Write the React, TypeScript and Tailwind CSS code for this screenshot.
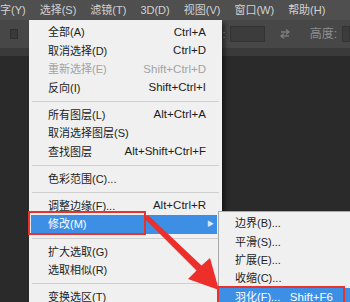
import React from 'react'

type Item =
  | { kind: 'sep' }
  | { kind: 'item'; label: string; shortcut?: string; disabled?: boolean; active?: boolean; sub?: boolean }

const MENU: Item[] = [
  { kind: 'item', label: '全部(A)', shortcut: 'Ctrl+A' },
  { kind: 'item', label: '取消选择(D)', shortcut: 'Ctrl+D' },
  { kind: 'item', label: '重新选择(E)', shortcut: 'Shift+Ctrl+D', disabled: true },
  { kind: 'item', label: '反向(I)', shortcut: 'Shift+Ctrl+I' },
  { kind: 'sep' },
  { kind: 'item', label: '所有图层(L)', shortcut: 'Alt+Ctrl+A' },
  { kind: 'item', label: '取消选择图层(S)' },
  { kind: 'item', label: '查找图层', shortcut: 'Alt+Shift+Ctrl+F' },
  { kind: 'sep' },
  { kind: 'item', label: '色彩范围(C)...' },
  { kind: 'sep' },
  { kind: 'item', label: '调整边缘(F)...', shortcut: 'Alt+Ctrl+R' },
  { kind: 'item', label: '修改(M)', active: true, sub: true },
  { kind: 'sep' },
  { kind: 'item', label: '扩大选取(G)' },
  { kind: 'item', label: '选取相似(R)' },
  { kind: 'sep' },
  { kind: 'item', label: '变换选区(T)' },
]

const SUB = [
  { label: '边界(B)...' },
  { label: '平滑(S)...' },
  { label: '扩展(E)...' },
  { label: '收缩(C)...' },
  { label: '羽化(F)...', shortcut: 'Shift+F6', active: true },
]

// the first menu ("文字") is scrolled off to the left in the shot, only its tail shows
const TOP = ['字(Y)', '选择(S)', '滤镜(T)', '3D(D)', '视图(V)', '窗口(W)', '帮助(H)']

export default function App() {
  return (
    <div className="relative h-[302px] w-[350px] overflow-hidden bg-[#2a2a2a] font-['Liberation_Sans','Noto_Sans_CJK_SC',sans-serif]">
      {/* menu bar */}
      <div className="flex h-5 items-center gap-[14px] bg-[#4f4f4f] text-[11px] text-[#d2d2d2]">
        {TOP.map((t) => (
          <span key={t} className="whitespace-nowrap">
            {t}
          </span>
        ))}
      </div>

      {/* options bar */}
      <div className="flex h-[28px] items-center bg-[#474747] pl-[10px]">
        <div className="h-[10px] w-[8px] border border-[#2f2f2f] bg-[#3a3a3a]" />
        <div className="ml-auto flex items-center">
          <span className="text-[11px] text-[#9a9a9a]">:</span>
          <div className="ml-[4px] h-[16px] w-[35px] border border-[#333] bg-[#3c3c3c]" />
          <svg className="ml-[14px] h-[12px] w-[12px]" viewBox="0 0 12 12" fill="none" stroke="#7a7a7a" strokeWidth="1.5">
            <path d="M2 4h8M7 1.5 10 4 7 6.5" />
            <path d="M10 8H2M5 5.5 2 8l3 2.5" />
          </svg>
          <span className="ml-[19px] text-[12px] text-[#8e8e8e]">高度:</span>
          <div className="ml-[5px] h-[16px] w-[8px] border border-[#333] bg-[#3c3c3c]" />
        </div>
      </div>
      <div className="h-[8px] bg-[#3a3a3a]" />

      {/* main dropdown */}
      <div className="absolute left-[29px] top-[20px] w-[193px] bg-[#f0f0f0] pt-[3px] shadow-[3px_3px_4px_rgba(0,0,0,0.45)]">
        {MENU.map((m, i) =>
          m.kind === 'sep' ? (
            <div key={i} className="flex h-[8.5px] items-center px-[3px]">
              <div className="h-px w-full bg-[#cfcfcf]" />
            </div>
          ) : (
            <div
              key={i}
              className={
                m.active
                  ? 'ml-[2px] mr-[5px] flex h-[19px] items-center justify-between bg-[#3d8fe6] pl-[17px] pr-[3px] text-white'
                  : 'flex h-[18.5px] items-center justify-between pl-[19px] pr-[16px] text-[#1c1c1c]'
              }
            >
              <span className={m.disabled ? 'text-[11px] text-[#a3a3a3]' : 'text-[11px]'}>{m.label}</span>
              {m.shortcut && (
                <span className={m.disabled ? 'text-[11.5px] text-[#a3a3a3]' : 'text-[11.5px]'}>{m.shortcut}</span>
              )}
              {m.sub && <span className="text-[7px] text-[#dbe9fb]">▶</span>}
            </div>
          ),
        )}
      </div>

      {/* submenu */}
      <div className="absolute left-[218px] top-[211px] w-[132px] border-l border-t border-[#a9a9a9] bg-[#f0f0f0] pt-[2.5px]">
        {SUB.map((s) => (
          <div
            key={s.label}
            className={
              s.active
                ? 'flex h-[20px] items-center justify-between bg-[#3d8fe6] pl-[16px] pr-[17px] text-white'
                : 'flex h-[18.3px] items-center justify-between pl-[16px] pr-[17px] text-[#1c1c1c]'
            }
          >
            <span className="text-[11px]">{s.label}</span>
            {s.shortcut && <span className="text-[11.5px]">{s.shortcut}</span>}
          </div>
        ))}
      </div>

      {/* red highlight boxes */}
      <div className="absolute left-[28px] top-[211px] h-[24px] w-[118px] border-2 border-[#e8322e]" />
      <div className="absolute left-[217px] top-[286px] h-[22px] w-[128px] border-2 border-[#e8322e]" />

      {/* red arrow */}
      <svg className="pointer-events-none absolute left-0 top-0" width="350" height="302" viewBox="0 0 350 302">
        <polygon
          fill="#ec2f2b"
          points="146,216.5 148,215 201.5,265.5 210,258 219,290 188,279 196.5,270.5 145,219"
        />
      </svg>
    </div>
  )
}
